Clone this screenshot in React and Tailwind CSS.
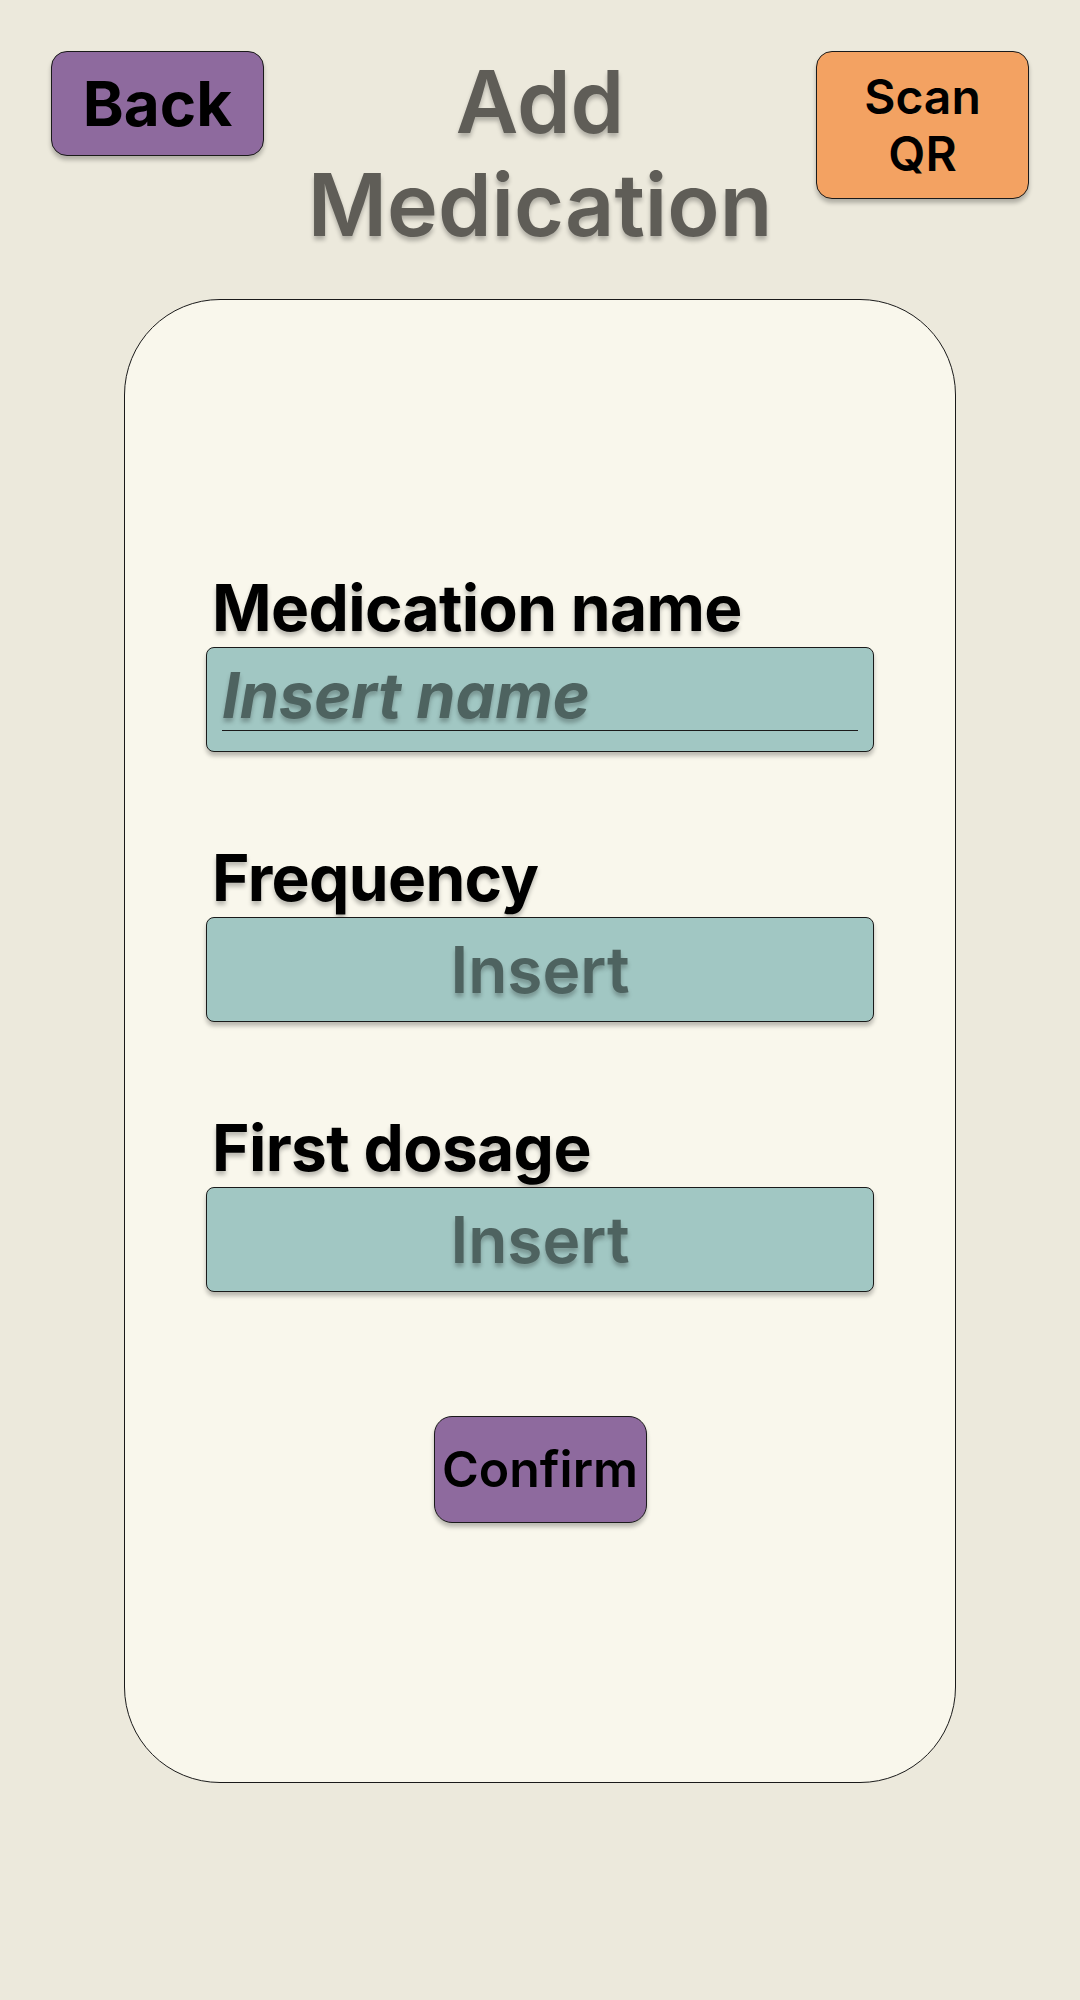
import React from 'react';

const textShadow = '[text-shadow:0_4px_4px_rgba(0,0,0,0.25)]';

const Field = ({ label, children }) => (
    <div className="flex flex-col">
        <div className={`pl-[6px] mb-[7px] text-[64px] leading-[64px] font-bold text-black tracking-[-0.01em] ${textShadow}`}>
            {label}
        </div>
        {children}
    </div>
);

const InsertBox = () => (
    <div className="h-[105px] w-full rounded-[8px] border border-[#1a1a1a] bg-[#a1c7c3] shadow-[0_4px_4px_rgba(0,0,0,0.25)] flex items-center justify-center">
        <span className={`text-[64px] font-semibold text-[#4e6360] ${textShadow}`}>Insert</span>
    </div>
);

export default function App() {
    return (
        <div className="min-h-[2000px] w-full bg-[#ece9dc] font-['Inter','Liberation_Sans',sans-serif]">
            <div className="flex items-start justify-between px-[51px] pt-[51px]">
                <button className="w-[213px] h-[105px] rounded-[16px] border border-[#1a1a1a] bg-[#8e6a9e] shadow-[0_4px_4px_rgba(0,0,0,0.25)] text-[62px] font-bold text-black flex items-center justify-center">
                    Back
                </button>
                <h1 className={`flex-1 text-center text-[86px] leading-[103px] font-semibold text-[#5f5d57] ${textShadow}`}>
                    Add
                    <br />
                    Medication
                </h1>
                <button className="w-[213px] h-[148px] rounded-[16px] border border-[#1a1a1a] bg-[#f3a262] shadow-[0_4px_4px_rgba(0,0,0,0.25)] text-[48px] leading-[57px] font-semibold text-black flex items-center justify-center text-center">
                    Scan
                    <br />
                    QR
                </button>
            </div>

            <div className="mx-auto mt-[42px] w-[832px] h-[1484px] rounded-[96px] border border-[#1a1a1a] bg-[#f9f7ec] px-[81px] pt-[276px] flex flex-col">
                <Field label="Medication name">
                    <div className="h-[105px] w-full rounded-[8px] border border-[#1a1a1a] bg-[#a1c7c3] shadow-[0_4px_4px_rgba(0,0,0,0.25)] px-[15px] pt-[13px]">
                        <div className={`border-b border-[#1a1a1a] text-[63px] leading-[69px] font-bold italic text-[#4e6360] ${textShadow}`}>
                            Insert name
                        </div>
                    </div>
                </Field>

                <div className="mt-[94px]">
                    <Field label="Frequency">
                        <InsertBox />
                    </Field>
                </div>

                <div className="mt-[94px]">
                    <Field label="First dosage">
                        <InsertBox />
                    </Field>
                </div>

                <div className="mt-[124px] flex justify-center">
                    <button className="w-[213px] h-[107px] rounded-[18px] border border-[#1a1a1a] bg-[#8e6a9e] shadow-[0_4px_4px_rgba(0,0,0,0.25)] text-[50px] font-semibold text-black flex items-center justify-center">
                        Confirm
                    </button>
                </div>
            </div>
        </div>
    );
}
